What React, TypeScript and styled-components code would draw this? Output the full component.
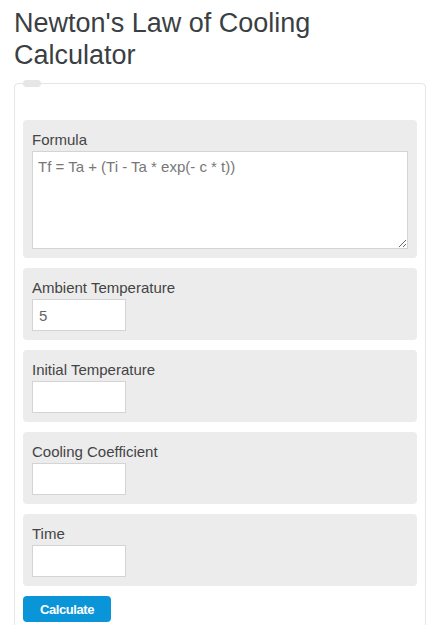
import React from 'react';
import styled, { createGlobalStyle } from 'styled-components';

const GlobalStyle = createGlobalStyle`
  body {
    margin: 0;
    background: #fff;
    font-family: "Liberation Sans", Arial, sans-serif;
  }
`;

const Page = styled.div`
  padding: 7px 19px 0 14px;
`;

const Title = styled.h1`
  margin: 0 0 12px;
  font-size: 27px;
  line-height: 32px;
  font-weight: 400;
  color: #3a3f44;
`;

const Card = styled.form`
  position: relative;
  border: 1px solid #e6e6e6;
  border-radius: 4px;
  padding: 36px 8px 8px;
  display: flex;
  flex-direction: column;
  gap: 10px;
`;

const Tab = styled.span`
  position: absolute;
  top: -4px;
  left: 8px;
  width: 18px;
  height: 7px;
  border-radius: 4px;
  background: #e6e6e6;
`;

const Group = styled.div`
  background: #ececec;
  border-radius: 4px;
  padding: 9px;
  display: flex;
  flex-direction: column;
  align-items: flex-start;
`;

const Label = styled.label`
  font-size: 15px;
  line-height: 22px;
  color: #444;
`;

const Field = styled.input`
  box-sizing: border-box;
  width: 94px;
  height: 32px;
  border: 1px solid #d4d4d4;
  background: #fff;
  padding: 0 6px;
  font-family: inherit;
  font-size: 15px;
  color: #666;
  outline: none;
`;

const Area = styled.textarea`
  box-sizing: border-box;
  width: 100%;
  height: 98px;
  border: 1px solid #d4d4d4;
  padding: 6px 5px;
  font-family: inherit;
  font-size: 15px;
  color: #777;
  resize: vertical;
  outline: none;
`;

const Button = styled.button`
  align-self: flex-start;
  width: 88px;
  height: 26px;
  border: none;
  border-radius: 4px;
  background: #0a95d8;
  color: #fff;
  font-family: inherit;
  font-size: 13px;
  font-weight: 700;
  letter-spacing: -0.4px;
  cursor: pointer;
`;

const fields = [
  { label: 'Ambient Temperature', value: '5' },
  { label: 'Initial Temperature', value: '' },
  { label: 'Cooling Coefficient', value: '' },
  { label: 'Time', value: '' },
];

export default function App() {
  return (
    <>
      <GlobalStyle />
      <Page>
        <Title>Newton's Law of Cooling Calculator</Title>
        <Card onSubmit={(e) => e.preventDefault()}>
          <Tab />
          <Group>
            <Label>Formula</Label>
            <Area defaultValue="Tf = Ta + (Ti - Ta * exp(- c * t))" />
          </Group>
          {fields.map((f) => (
            <Group key={f.label}>
              <Label>{f.label}</Label>
              <Field defaultValue={f.value} />
            </Group>
          ))}
          <Button type="button">Calculate</Button>
        </Card>
      </Page>
    </>
  );
}
